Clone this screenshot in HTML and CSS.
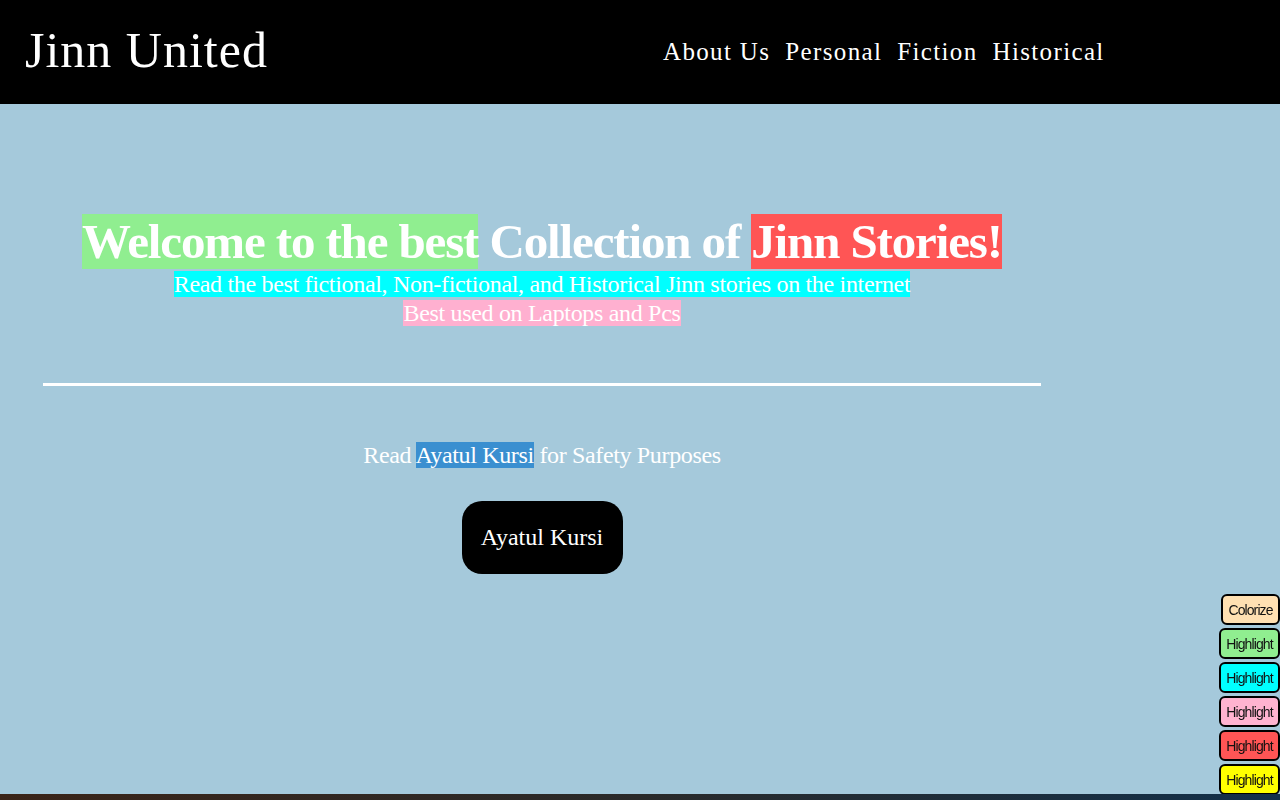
FILE: index.html
```html
<!DOCTYPE html>
<html>
<head>
<meta charset="utf-8">
<link rel="stylesheet" href="styles.css">
</head>
<body>
<header class="topbar">
  <div class="brand">Jinn United</div>
  <nav class="nav">
    <a href="#">About Us</a>
    <a href="#">Personal</a>
    <a href="#">Fiction</a>
    <a href="#">Historical</a>
  </nav>
</header>
<main class="main">
  <section class="hero">
    <h1 class="title"><span class="hl-green">Welcome to the best</span> Collection of <span class="hl-red">Jinn Stories!</span></h1>
    <p class="sub"><span class="hl-cyan">Read the best fictional, Non-fictional, and Historical Jinn stories on the internet</span></p>
    <p class="sub"><span class="hl-pink">Best used on Laptops and Pcs</span></p>
  </section>
  <hr class="rule">
  <p class="safety">Read <span class="hl-blue">Ayatul Kursi</span> for Safety Purposes</p>
  <div class="btn-row"><button class="kursi">Ayatul Kursi</button></div>
</main>
<aside class="tools">
  <button class="tool t-peach">Colorize</button>
  <button class="tool t-green">Highlight</button>
  <button class="tool t-cyan">Highlight</button>
  <button class="tool t-pink">Highlight</button>
  <button class="tool t-red">Highlight</button>
  <button class="tool t-yellow">Highlight</button>
</aside>
<div class="taskbar"></div>
</body>
</html>
```

FILE: styles.css
```css
html, body {
  margin: 0;
  padding: 0;
  height: 100%;
}
body {
  background: #a5c9db;
  font-family: "Liberation Serif", "Times New Roman", serif;
  color: #fff;
  overflow: hidden;
}
.topbar {
  background: #000;
  height: 104px;
  display: flex;
  align-items: center;
  padding: 0 0 0 25px;
  box-sizing: border-box;
}
.brand {
  font-size: 50px;
  letter-spacing: 1px;
  color: #fff;
  width: 638px;
  margin-top: -4px;
}
.nav {
  display: flex;
  gap: 15px;
  margin-top: 0;
}
.nav a {
  color: #fff;
  text-decoration: none;
  font-size: 25px;
  letter-spacing: 1.35px;
}
.main {
  width: 998px;
  margin-left: 43px;
  display: flex;
  flex-direction: column;
  align-items: center;
}
.hero {
  margin-top: 109px;
  text-align: center;
  width: 100%;
}
.title {
  font-size: 49px;
  font-weight: bold;
  margin: 0;
  line-height: 57px;
  letter-spacing: -1.13px;
}
.sub {
  margin: 0;
  font-size: 24px;
  line-height: 29px;
  letter-spacing: -0.32px;
}
.hl-green { background: #90ee90; }
.hl-red { background: #ff5555; }
.hl-cyan { background: #00ffff; }
.hl-pink { background: #ffb0d0; }
.hl-blue { background: #3a8fd0; }
.rule {
  width: 100%;
  border: 0;
  height: 3px;
  background: #fff;
  margin: 55px 0 0;
}
.safety {
  font-size: 24px;
  margin: 54px 0 0;
  line-height: 30px;
  letter-spacing: -0.35px;
}
.btn-row { margin-top: 31px; }
.kursi {
  background: #000;
  color: #fff;
  border: 0;
  border-radius: 20px;
  width: 161px;
  height: 73px;
  font-family: "Liberation Serif", serif;
  font-size: 24px;
}
.tools {
  position: fixed;
  right: 0;
  top: 594px;
  display: flex;
  flex-direction: column;
  align-items: flex-end;
  gap: 3px;
}
.tool {
  font-family: "Liberation Sans", Arial, sans-serif;
  font-size: 14px;
  color: #111;
  border: 2px solid #000;
  border-radius: 6px;
  height: 31px;
  width: 61px;
  padding: 0;
  letter-spacing: -0.9px;
}
.t-peach { background: #ffe0b2; width: 59px; }
.t-green { background: #90ee90; }
.t-cyan { background: #00ffff; }
.t-pink { background: #ffb3d0; }
.t-red { background: #ff5555; }
.t-yellow { background: #ffff00; }
.taskbar {
  position: fixed;
  left: 0;
  right: 0;
  bottom: 0;
  height: 6px;
  background: linear-gradient(90deg, #3a2418, #2a2a2a 50%, #13304a);
}
```
